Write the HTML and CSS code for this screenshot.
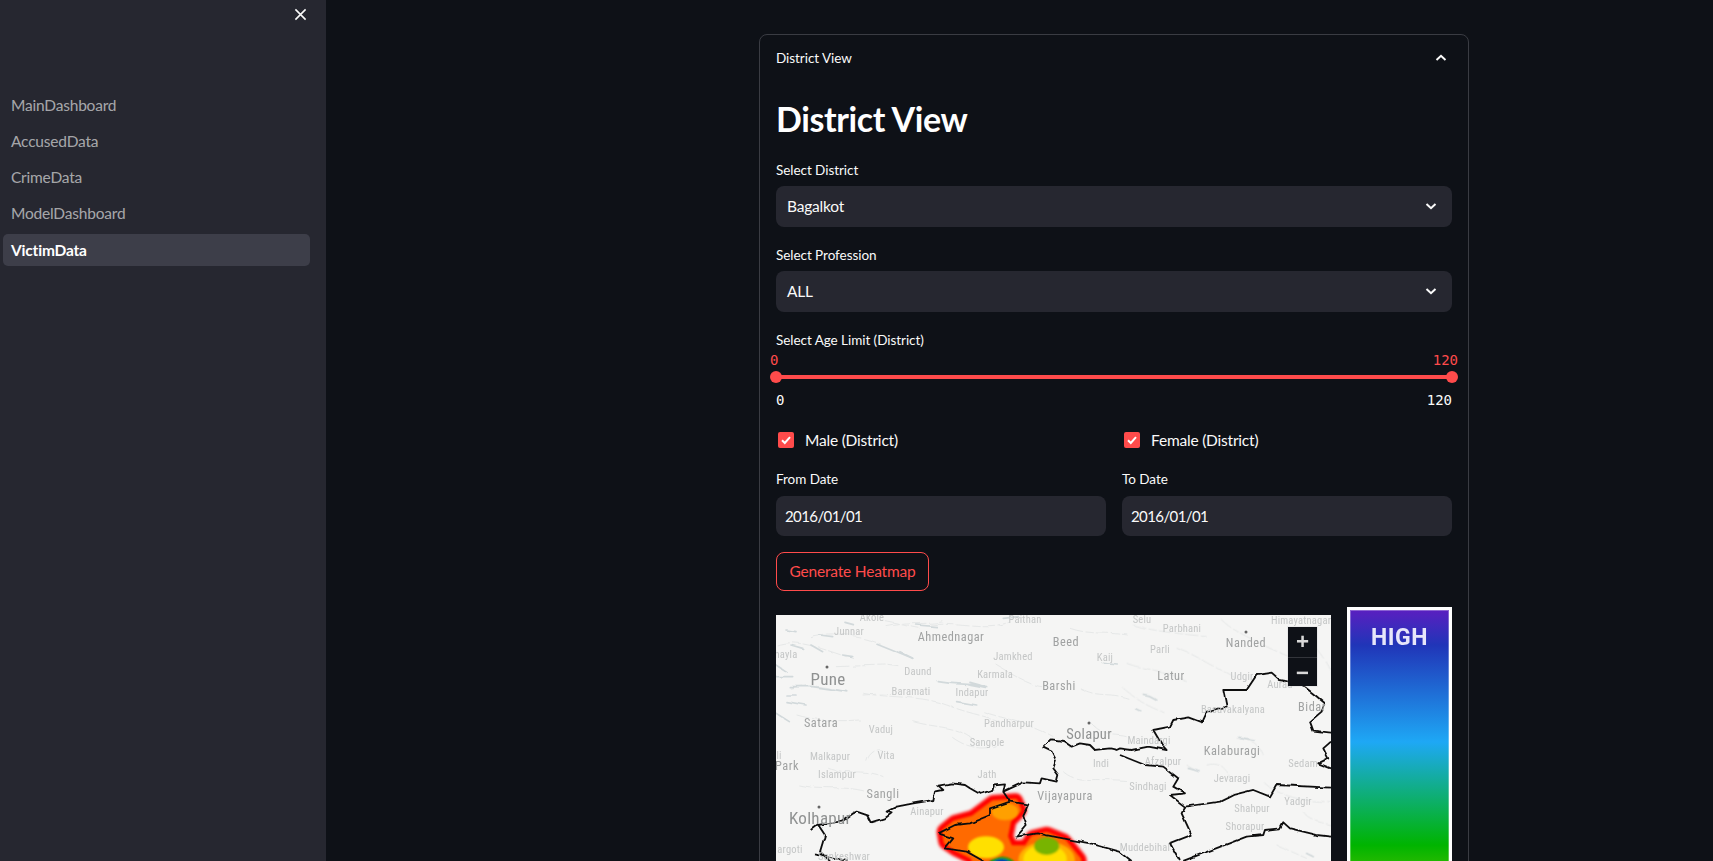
FILE: index.html
```html
<!DOCTYPE html>
<html lang="en">
<head>
<meta charset="utf-8">
<title>VictimData</title>
<link rel="stylesheet" href="styles.css">
</head>
<body>
<aside class="sidebar">
  <div class="sidebar-top">
    <svg class="close-icon" viewBox="0 0 14 14"><path d="M1.500 1.500l11 11M12.500 1.500l-11 11"/></svg>
  </div>
  <nav class="nav">
    <a class="nav-item">MainDashboard</a>
    <a class="nav-item">AccusedData</a>
    <a class="nav-item">CrimeData</a>
    <a class="nav-item">ModelDashboard</a>
    <a class="nav-item active">VictimData</a>
  </nav>
</aside>
<main class="main">
  <section class="card">
    <header class="card-head">
      <span>District View</span>
      <svg class="chev" viewBox="0 0 12 8"><path d="M1.500 6L6 1.800 10.500 6"/></svg>
    </header>
    <div class="card-body">
      <h1 class="title">District View</h1>

      <div class="field">
        <label class="label">Select District</label>
        <div class="select"><span>Bagalkot</span><svg class="chev" viewBox="0 0 12 8"><path d="M1.500 2L6 6.200 10.500 2"/></svg></div>
      </div>
      <div class="field">
        <label class="label">Select Profession</label>
        <div class="select"><span>ALL</span><svg class="chev" viewBox="0 0 12 8"><path d="M1.500 2L6 6.200 10.500 2"/></svg></div>
      </div>

      <div class="slider">
        <label class="label">Select Age Limit (District)</label>
        <div class="slider-vals"><span>0</span><span>120</span></div>
        <div class="track"><i class="thumb left"></i><i class="thumb right"></i></div>
        <div class="slider-ticks"><span>0</span><span>120</span></div>
      </div>

      <div class="checks">
        <div class="check"><span class="box"><svg viewBox="0 0 16 16"><path d="M4 8.200l2.800 2.800L12 5.200"/></svg></span>Male (District)</div>
        <div class="check"><span class="box"><svg viewBox="0 0 16 16"><path d="M4 8.200l2.800 2.800L12 5.200"/></svg></span>Female (District)</div>
      </div>

      <div class="dates">
        <div><label class="label">From Date</label><div class="input">2016/01/01</div></div>
        <div><label class="label">To Date</label><div class="input">2016/01/01</div></div>
      </div>

      <button class="btn">Generate Heatmap</button>

      <div class="viz">
        <div class="map">
          <svg class="map-svg" viewBox="0 0 555 300">
            <defs>
              <filter id="glow" x="-20%" y="-20%" width="140%" height="140%"><feGaussianBlur stdDeviation="5"/></filter>
              <filter id="soft" x="-20%" y="-20%" width="140%" height="140%"><feGaussianBlur stdDeviation="3"/></filter>
              <filter id="rough" x="-5%" y="-5%" width="110%" height="110%">
                <feTurbulence type="fractalNoise" baseFrequency=".09" numOctaves="2" seed="4"/>
                <feDisplacementMap in="SourceGraphic" scale="3.500" xChannelSelector="R" yChannelSelector="G"/>
              </filter>
              <filter id="rough2" x="-5%" y="-5%" width="110%" height="110%">
                <feTurbulence type="fractalNoise" baseFrequency=".05" numOctaves="3" seed="9"/>
                <feDisplacementMap in="SourceGraphic" scale="5"/>
              </filter>
            </defs>

            <!-- roads and water, drawn in 3x crop coordinates -->
            <g filter="url(#rough2)">
              <g transform="translate(-6,-10) scale(.3333)">
                <path class="road" d="M20 120C80 100 150 130 230 155M120 95C170 80 260 85 330 115M280 265C360 280 450 270 530 300S640 330 690 350M430 350C500 370 560 360 620 410M60 250C110 235 170 245 235 262M80 330C130 345 200 350 270 345M85 540C150 555 220 540 290 560M175 490C230 510 280 490 340 515M290 470C295 445 320 430 335 435M550 400C590 430 640 440 680 425M640 320C690 340 760 345 850 395M680 180C730 210 790 250 830 245M480 60C560 50 650 80 720 55M350 65C420 50 480 60 520 50M900 70C960 90 1000 80 1075 90M930 250C990 280 1010 260 1075 280M960 350C1000 400 1040 380 1075 395M880 500C920 540 960 520 1075 530"/>
                <path class="water" d="M390 140L428 160M505 230C560 240 610 235 650 245M595 240L650 250M440 60L500 65M1000 175L1045 180M700 40L745 35M600 232L630 240M560 290L620 300"/>
              </g>
              <g transform="translate(344,-10) scale(.3333)">
                <path class="road" d="M40 60C100 80 180 85 260 95M170 130C230 150 290 190 350 220M20 175C90 200 130 190 200 230M300 40C350 90 450 130 520 160M590 130C620 170 633 190 633 210M260 480C300 470 320 490 330 520M200 480L240 505M10 250C60 290 80 300 130 320M350 400C390 400 420 420 430 450M430 530C470 570 540 590 633 590M550 620C570 650 600 650 633 660M470 720L560 760"/>
                <path class="water" d="M70 268C90 270 100 280 110 285M360 400L405 408M205 490L240 500M45 310L65 320M560 745L580 755"/>
              </g>
              <g transform="scale(.3333)">
                <path class="water" d="M30 45L60 50M130 60L170 65M300 85L350 105 410 130M200 120L230 125M105 90L140 110M45 90L80 100M0 150L30 170M0 185L50 185M40 215L110 215 215 230M30 240L60 240M30 260L90 270M0 295L40 320M210 25L235 32"/>
                <path class="road" d="M180 155L330 150 370 155M260 240L350 235M330 20L430 40"/>
              </g>
            </g>

            <!-- heatmap -->
            <g transform="translate(154,165) scale(.3333)">
              <path filter="url(#glow)" class="heat-red" d="M45 155L75 130 130 115 170 85 190 70 255 65 265 90 235 120 225 170 240 205 290 205 310 175 350 165 400 185 445 240 440 300H150L130 230 80 205 50 185Z"/>
              <path filter="url(#soft)" class="heat-orange" d="M45 155L75 130 130 115 170 85 190 70 255 65 265 90 235 120 225 170 240 205 290 205 310 175 350 165 400 185 445 240 440 300H150L130 230 80 205 50 185Z"/>
              <g filter="url(#soft)">
                <ellipse cx="225" cy="95" rx="40" ry="26" fill="#ffa000"/>
                <ellipse cx="168" cy="202" rx="54" ry="33" fill="#ffe000"/>
                <ellipse cx="350" cy="240" rx="85" ry="55" fill="#ffb000"/>
                <ellipse cx="345" cy="238" rx="65" ry="45" fill="#ffe000"/>
                <ellipse cx="350" cy="198" rx="38" ry="27" fill="#78b400"/>
                <ellipse cx="215" cy="256" rx="40" ry="26" fill="#10a000"/>
                <ellipse cx="215" cy="262" rx="32" ry="24" fill="#0020c8"/>
              </g>
            </g>

            <!-- district borders -->
            <g filter="url(#rough)">
              <g transform="translate(-6,-10) scale(.3333)" class="border">
                <path d="M125 675L145 660 170 655 215 650 250 625 260 620 295 632 305 652 345 640 365 625 350 620 380 605 430 595 490 585 495 560 520 555 505 542 545 535 585 540 600 550 630 567 670 555 675 538 705 535 700 560 760 532 810 535 815 520 860 530 865 510 850 490 858 465 845 440 820 428 845 403 880 408 905 425 930 415 960 420 975 435 1020 430 1040 435 1050 430 1085 435 1135 425 1190 435 1175 418 1150 375 1200 365 1210 345 1255 337 1295 352 1310 320 1370 305 1360 255 1430 255 1460 210 1505 203 1530 225 1590 235 1635 270 1665 295 1655 320 1620 350 1630 377 1683 383"/>
                <path d="M1050 450L1125 480 1180 485 1225 520 1210 545 1245 565 1200 570 1245 605 1350 590 1390 570 1450 555 1500 575 1520 540 1683 548"/>
                <path d="M1245 605L1235 625 1265 690 1200 715 1230 768M1240 768L1430 695 1480 690 1485 675 1530 670 1540 652 1560 670 1640 690 1683 695"/>
                <path d="M1683 410L1660 430 1675 460 1645 475 1683 490"/>
                <path d="M700 560L720 590 775 598 760 630 770 660 740 695 800 685 880 700 960 715 1050 740 1085 768"/>
                <path d="M505 685L555 660 600 655 660 630 660 610 720 590M505 685L550 700 525 730 590 740 640 768"/>
                <path d="M145 660L165 690 150 740 180 768M135 745L230 768"/>
              </g>
            </g>

            <!-- places -->
            <g class="labels">
              <circle class="dot" cx="51" cy="52" r="1.500"/><circle class="dot" cx="313" cy="108" r="1.500"/><circle class="dot" cx="43" cy="192" r="1.500"/><circle class="dot" cx="470" cy="17" r="1.500"/>
              <text class="t-f" x="96" y="6">Akole</text><text class="t-f" x="249" y="8">Paithan</text><text class="t-f" x="73" y="20">Junnar</text>
              <text class="t-m" x="175" y="26">Ahmednagar</text><text class="t-m" x="290" y="31">Beed</text>
              <text class="t-f" x="237" y="45">Jamkhed</text><text class="t-f" x="329" y="46">Kaij</text><text class="t-f" x="10" y="43">hayla</text>
              <text class="t-l" x="52" y="70">Pune</text>
              <text class="t-f" x="142" y="60">Daund</text><text class="t-f" x="219" y="63">Karmala</text><text class="t-m" x="283" y="75">Barshi</text>
              <text class="t-f" x="135" y="80">Baramati</text><text class="t-f" x="196" y="81">Indapur</text>
              <text class="t-m" x="45" y="112">Satara</text><text class="t-f" x="105" y="118">Vaduj</text><text class="t-f" x="233" y="112">Pandharpur</text>
              <text class="t-l s2" x="313" y="124">Solapur</text><text class="t-f" x="211" y="131">Sangole</text>
              <text class="t-f" x="54" y="145">Malkapur</text><text class="t-f" x="110" y="144">Vita</text><text class="t-f" x="3" y="144">li</text><text class="t-m" x="11" y="155">Park</text>
              <text class="t-f" x="61" y="163">Islampur</text><text class="t-f" x="211" y="163">Jath</text><text class="t-f" x="325" y="152">Indi</text>
              <text class="t-m" x="107" y="183">Sangli</text><text class="t-m" x="289" y="185">Vijayapura</text><text class="t-f" x="151" y="200">Ainapur</text>
              <text class="t-l" x="44" y="209">Kolhapur</text><text class="t-f" x="14" y="238">argoti</text><text class="t-f" x="68" y="245">Sankeshwar</text>

              <text class="t-f" x="366" y="8">Selu</text><text class="t-f" x="406" y="17">Parbhani</text><text class="t-f" x="525" y="9">Himayatnagar</text>
              <text class="t-m" x="470" y="32">Nanded</text><text class="t-f" x="384" y="38">Parli</text><text class="t-m" x="395" y="65">Latur</text>
              <text class="t-f" x="466" y="65">Udgir</text><text class="t-f" x="504" y="73">Aurad</text><text class="t-f" x="457" y="98">Basavakalyana</text>
              <text class="t-m" x="536" y="96">Bidar</text><text class="t-f" x="373" y="129">Maindargi</text><text class="t-m" x="456" y="140">Kalaburagi</text>
              <text class="t-f" x="387" y="150">Afzalpur</text><text class="t-f" x="527" y="152">Sedam</text><text class="t-f" x="456" y="167">Jevaragi</text>
              <text class="t-f" x="372" y="175">Sindhagi</text><text class="t-f" x="522" y="190">Yadgir</text><text class="t-f" x="476" y="197">Shahpur</text>
              <text class="t-f" x="469" y="215">Shorapur</text><text class="t-f" x="369" y="236">Muddebihal</text>
            </g>
          </svg>
          <div class="zoom">
            <button class="zoom-btn">+</button>
            <button class="zoom-btn">&minus;</button>
          </div>
        </div>
        <div class="legend"><span class="legend-high">HIGH</span></div>
      </div>
    </div>
  </section>
</main>
</body>
</html>
```
FILE: styles.css
```css
* { box-sizing: border-box; }
html, body { height: 100%; }
body {
  margin: 0;
  display: flex;
  height: 861px;
  overflow: hidden;
  background: #0e1117;
  color: #fafafa;
  font-family: "Lato", "Noto Sans", sans-serif;
  font-size: 15.500px;
  letter-spacing: -.2px;
}

.sidebar { flex: 0 0 326px; background: #262730; }
.sidebar-top { height: 89px; display: flex; justify-content: flex-end; padding: 8px 19px 0 0; }
.close-icon { width: 13px; height: 13px; fill: none; stroke: #fafafa; stroke-width: 1.700; }
.nav { display: flex; flex-direction: column; gap: 4.250px; padding: 0 16px 0 3px; }
.nav-item { height: 32px; display: flex; align-items: center; padding: 0 0 1px 8px; border-radius: 5px; color: rgba(250,250,250,.62); }
.nav-item.active { background: #3d3e49; color: #fff; font-weight: 700; }

.main { flex: 1; padding: 34px 0 0 433px; overflow: hidden; }
.card { width: 710px; height: 1100px; border: 1px solid #3a3c43; border-radius: 8px; }
.card-head { height: 46px; display: flex; align-items: center; justify-content: space-between; padding: 0 21px 1px 16px; font-size: 13.500px; letter-spacing: -.05px; }
.chev { width: 12px; height: 8px; fill: none; stroke: #fafafa; stroke-width: 2; }
.card-body { padding: 13px 16px 0; }
.title { margin: 0 0 14px; height: 52px; line-height: 50px; font-size: 34px; font-weight: 700; letter-spacing: -.4px; color: #fff; }

.label { display: block; height: 20px; line-height: 20px; font-size: 13.500px; letter-spacing: -.05px; margin-bottom: 6px; }
.field { margin-bottom: 18px; }
.select { height: 41px; display: flex; align-items: center; justify-content: space-between; background: #262730; border-radius: 8px; padding: 0 15px 2px 11px; }

.slider .label { margin-bottom: 0; }
.slider-vals, .slider-ticks { display: flex; justify-content: space-between; font-family: "DejaVu Sans Mono", "Liberation Mono", monospace; font-size: 14px; letter-spacing: 0; line-height: 20px; height: 20px; }
.slider-vals { color: #ff4b4b; margin: 0 -6px; }
.track { position: relative; height: 4px; margin: 5px 0 11px; background: #ff4b4b; }
.slider-ticks { margin-bottom: -1px; }
.thumb { position: absolute; top: -4px; width: 12px; height: 12px; border-radius: 50%; background: #ff4b4b; }
.thumb.left { left: -6px; }
.thumb.right { right: -6px; }

.checks { display: grid; grid-template-columns: 346px 1fr; margin-top: 21px; }
.check { display: flex; align-items: center; gap: 11px; height: 20px; padding-left: 2px; }
.box { width: 16px; height: 16px; background: #ff4b4b; border-radius: 2px; flex: none; }
.box svg { display: block; fill: none; stroke: #fff; stroke-width: 2; }

.dates { display: grid; grid-template-columns: 330px 330px; gap: 16px; margin-top: 19px; }
.dates .label { margin-bottom: 7px; }
.input { height: 40px; line-height: 40px; padding-left: 9px; font-size: 15px; letter-spacing: -.6px; background: #262730; border-radius: 8px; }

.btn { display: block; width: 153px; height: 39px; margin-top: 16px; padding: 0 0 2px; background: transparent; border: 1px solid #ff4b4b; border-radius: 8px; color: #ff4b4b; font: inherit; letter-spacing: -.2px; }

.viz { display: flex; align-items: flex-start; gap: 16px; margin-top: 16px; }
.map { position: relative; width: 555px; height: 300px; margin-top: 8px; background: #f5f5f4; overflow: hidden; }
.map-svg { display: block; width: 555px; height: 300px; }
.road { fill: none; stroke: #e2e5e5; stroke-width: 2.500; stroke-dasharray: 40 8 25 6; }
.water { fill: none; stroke: #d2d9db; stroke-width: 5; stroke-linecap: round; }
.heat-red { fill: #ff0000; stroke: #ff0000; stroke-width: 50; stroke-linejoin: round; }
.heat-orange { fill: #ff6a00; stroke: #ff6a00; stroke-width: 18; stroke-linejoin: round; }
.border { fill: none; stroke: #111; stroke-width: 5.500; stroke-linejoin: round; }
.labels text { font-family: "Roboto", "Lato", sans-serif; font-stretch: 87%; text-anchor: middle; }
.dot { fill: #666; }
.t-f { font-size: 10.500px; fill: #c4c6c6; letter-spacing: .2px; }
.t-m { font-size: 12.300px; fill: #a0a2a2; letter-spacing: .5px; }
.t-l { font-size: 17px; fill: #8f9191; letter-spacing: .3px; }
.t-l.s2 { font-size: 14.500px; }
.zoom { position: absolute; top: 12px; right: 14px; width: 29px; display: flex; flex-direction: column; background: #0e1117; box-shadow: 0 0 0 1px rgba(200,200,200,.25); }
.zoom-btn { width: 29px; height: 29.500px; padding: 0; background: transparent; border: 0; color: #d8d8d8; font: 700 23px/29px "Noto Sans", sans-serif; }
.zoom-btn + .zoom-btn { border-top: 1px solid #33353b; }

.legend { flex: 0 0 105px; height: 300px; display: flex; justify-content: center; align-items: flex-start; padding-top: 16px; border: 3.500px solid #fff; box-shadow: inset 0 0 0 1px rgba(255,255,255,.3); background: linear-gradient(#5a1fc0 0, #2035b8 35px, #1ea8f5 132px, #00b400 235px, #7fc800 300px); }
.legend-high { font: 700 23px/24px "Roboto", sans-serif; letter-spacing: .5px; color: #e6e6fa; filter: blur(.7px); }
```
